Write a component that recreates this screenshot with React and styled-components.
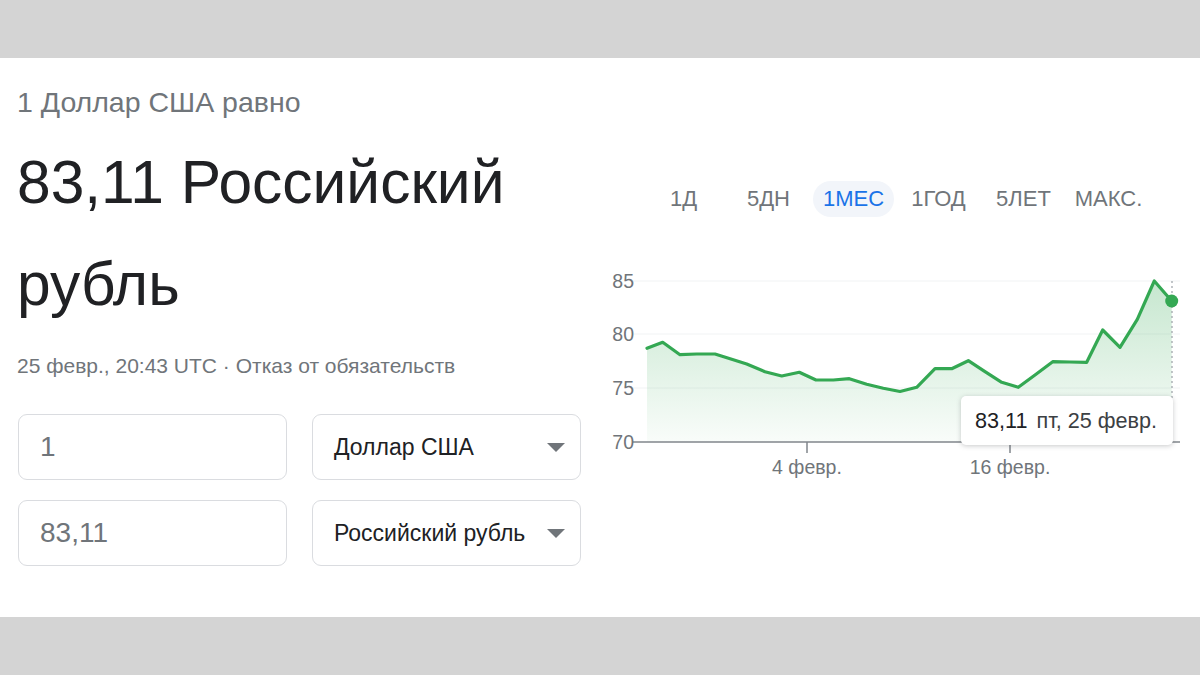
import React from "react";
import styled, { createGlobalStyle } from "styled-components";

const GlobalStyle = createGlobalStyle`
  html, body { margin: 0; padding: 0; }
  body {
    font-family: "Liberation Sans", Arial, Helvetica, sans-serif;
    background: #d4d4d4;
  }
  * { box-sizing: border-box; }
`;

const Page = styled.div`
  width: 1200px;
  height: 675px;
  display: flex;
  flex-direction: column;
  background: #d4d4d4;
`;

const Band = styled.div`
  height: ${(p) => p.$h}px;
  flex: ${(p) => (p.$grow ? 1 : "none")};
  background: #d4d4d4;
`;

const Card = styled.section`
  height: 559px;
  background: #ffffff;
  display: flex;
`;

const LeftCol = styled.div`
  width: 600px;
  padding: 28px 0 0 17px;
  display: flex;
  flex-direction: column;
`;

const Subtitle = styled.div`
  font-size: 28.5px;
  line-height: 32px;
  color: #70757a;
`;

const BigValue = styled.div`
  margin-top: 13px;
  font-size: 60.5px;
  line-height: 102px;
  color: #202124;
  width: 520px;
`;

const Stamp = styled.div`
  margin-top: 19px;
  font-size: 21px;
  line-height: 24px;
  color: #70757a;
`;

const FieldGrid = styled.div`
  margin: 36px 0 0 1px;
  display: grid;
  grid-template-columns: 269px 269px;
  grid-auto-rows: 66px;
  column-gap: 25px;
  row-gap: 20px;
`;

const Field = styled.div`
  border: 1px solid #dadce0;
  border-radius: 9px;
  display: flex;
  align-items: center;
  justify-content: space-between;
  padding: 0 15px 0 ${(p) => (p.$select ? 21 : 21)}px;
  font-size: ${(p) => (p.$select ? 23 : 28)}px;
  color: ${(p) => (p.$select ? "#202124" : "#70757a")};
`;

const Caret = styled.span`
  width: 0;
  height: 0;
  border-left: 9px solid transparent;
  border-right: 9px solid transparent;
  border-top: 9px solid #70757a;
`;

const RightCol = styled.div`
  flex: 1;
  display: flex;
  flex-direction: column;
  padding-top: 121px;
`;

const Tabs = styled.div`
  display: flex;
  margin-left: 41px;
  height: 40px;
`;

const Tab = styled.div`
  width: 85px;
  height: 40px;
  display: flex;
  align-items: center;
  justify-content: center;
`;

const Pill = styled.span`
  padding: 6px 10px;
  border-radius: 18px;
  font-size: 22px;
  line-height: 24px;
  white-space: nowrap;
  color: ${(p) => (p.$active ? "#1a73e8" : "#70757a")};
  background: ${(p) => (p.$active ? "#f2f5fa" : "transparent")};
`;

const ChartWrap = styled.div`
  position: relative;
  margin-top: 41px;
  width: 600px;
  height: 230px;
`;

const ChartSvg = styled.svg`
  display: block;
  font-family: "Liberation Sans", Arial, sans-serif;
`;

const Tooltip = styled.div`
  position: absolute;
  left: 361px;
  top: 136px;
  width: 212px;
  height: 49px;
  background: #fff;
  border-radius: 5px;
  box-shadow: 0 1px 5px rgba(60, 64, 67, 0.28);
  display: flex;
  align-items: center;
  gap: 9px;
  padding: 0 14px;
  font-size: 21.6px;
  line-height: 24px;
  white-space: nowrap;
`;

const TipValue = styled.span`
  color: #202124;
`;

const TipDate = styled.span`
  color: #3c4043;
`;

const OX = 600;
const OY = 260;

const points = [
  [647, 348.3], [662.7, 342.3], [680, 354.7], [696.7, 354], [715, 354],
  [731.7, 359.3], [746.7, 364], [765, 371.7], [781.7, 376], [799.3, 372.3],
  [816, 380], [833.3, 380], [849.3, 378.7], [866.7, 384.3], [883.3, 388.3],
  [900, 391.5], [916.7, 387.3], [935, 368.7], [951.7, 368.7], [968.3, 360.7],
  [985, 371.7], [1001.7, 382.3], [1018.3, 387.3], [1035, 375], [1052.7, 361.7],
  [1070, 362], [1086.7, 362.3], [1102.7, 330], [1120, 347.3], [1137.3, 319.3],
  [1154.3, 281], [1171.7, 301],
].map(([x, y]) => [x - OX, y - OY]);

const linePath = points.map(([x, y], i) => `${i ? "L" : "M"}${x} ${y}`).join(" ");
const areaPath = `${linePath} L${points[points.length - 1][0]} 182 L${points[0][0]} 182 Z`;

const grid = [
  { v: "85", y: 21 },
  { v: "80", y: 74 },
  { v: "75", y: 128 },
];

const Chart = () => (
  <ChartSvg width="600" height="230" viewBox="0 0 600 230">
    <defs>
      <linearGradient id="fillG" x1="0" y1="0" x2="0" y2="1">
        <stop offset="0" stopColor="#34a853" stopOpacity="0.28" />
        <stop offset="1" stopColor="#34a853" stopOpacity="0.03" />
      </linearGradient>
    </defs>
    {grid.map((g) => (
      <g key={g.v}>
        <line x1="33" x2="580" y1={g.y} y2={g.y} stroke="#f1f3f4" strokeWidth="1" />
        <text x="34" y={g.y + 7} textAnchor="end" fontSize="19.5" fill="#70757a">{g.v}</text>
      </g>
    ))}
    <path d={areaPath} fill="url(#fillG)" />
    <line x1="33" x2="580" y1="182" y2="182" stroke="#80868b" strokeWidth="1.5" />
    <text x="34" y="189" textAnchor="end" fontSize="19.5" fill="#70757a">70</text>
    <line x1="207" x2="207" y1="182" y2="193" stroke="#80868b" strokeWidth="1.5" />
    <line x1="410" x2="410" y1="182" y2="193" stroke="#80868b" strokeWidth="1.5" />
    <text x="207" y="214" textAnchor="middle" fontSize="19.5" fill="#70757a">4 февр.</text>
    <text x="410" y="214" textAnchor="middle" fontSize="19.5" fill="#70757a">16 февр.</text>
    <line x1="572" x2="572" y1="21" y2="182" stroke="#9aa0a6" strokeWidth="1.2" strokeDasharray="2 3" />
    <path d={linePath} fill="none" stroke="#34a853" strokeWidth="3.2" strokeLinejoin="round" strokeLinecap="round" />
    <circle cx="571.7" cy="41" r="6.5" fill="#34a853" />
  </ChartSvg>
);

const ranges = ["1Д", "5ДН", "1МЕС", "1ГОД", "5ЛЕТ", "МАКС."];

export default function App() {
  return (
    <>
      <GlobalStyle />
      <Page>
        <Band $h={58} />
        <Card>
          <LeftCol>
            <Subtitle>1 Доллар США равно</Subtitle>
            <BigValue>83,11 Российский рубль</BigValue>
            <Stamp>25 февр., 20:43 UTC · Отказ от обязательств</Stamp>
            <FieldGrid>
              <Field>1</Field>
              <Field $select>
                Доллар США
                <Caret />
              </Field>
              <Field>83,11</Field>
              <Field $select>
                Российский рубль
                <Caret />
              </Field>
            </FieldGrid>
          </LeftCol>
          <RightCol>
            <Tabs>
              {ranges.map((r) => (
                <Tab key={r}>
                  <Pill $active={r === "1МЕС"}>{r}</Pill>
                </Tab>
              ))}
            </Tabs>
            <ChartWrap>
              <Chart />
              <Tooltip>
                <TipValue>83,11</TipValue>
                <TipDate>пт, 25 февр.</TipDate>
              </Tooltip>
            </ChartWrap>
          </RightCol>
        </Card>
        <Band $grow />
      </Page>
    </>
  );
}
